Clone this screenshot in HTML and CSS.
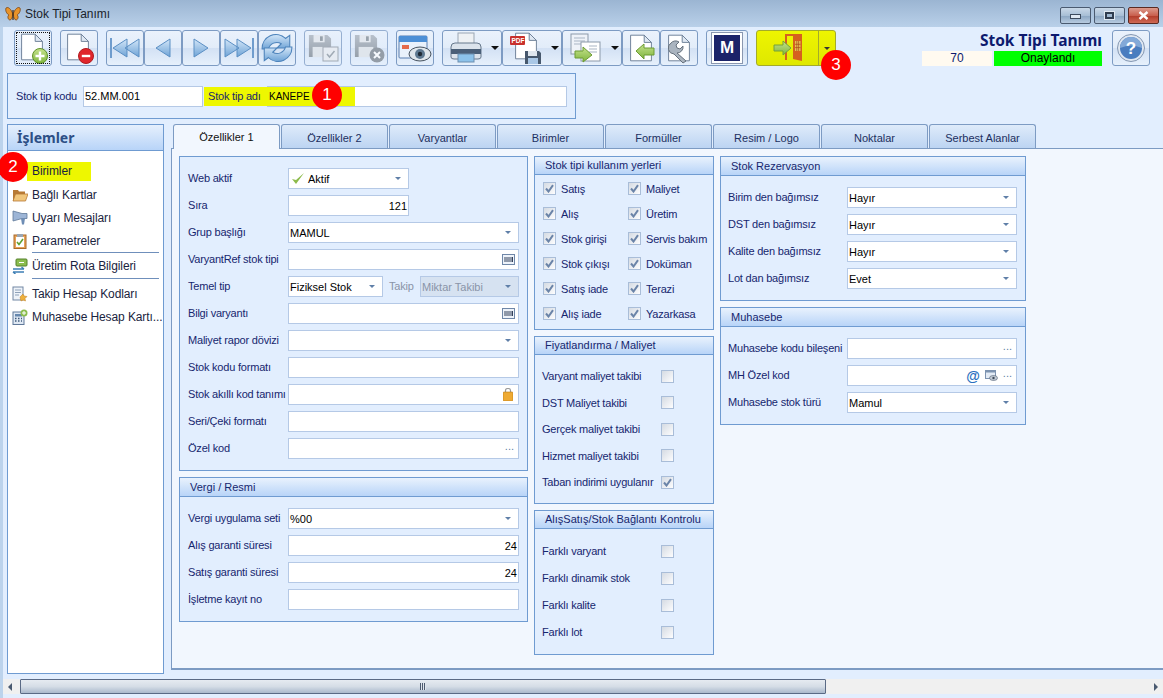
FILE: index.html
```html
<!DOCTYPE html>
<html lang="en">
<head>
    <meta charset="UTF-8">
    <title>Stok Tipi Tanımı</title>
    <link rel="stylesheet" href="styles.css">
</head>
<body>
    <svg class="defs" width="0" height="0">
        <defs>
            <linearGradient id="blueFill" x1="0" y1="0" x2="0" y2="1"><stop offset="0" stop-color="#d3e6f8"/><stop offset="1" stop-color="#6ea3d6"/></linearGradient>
            <linearGradient id="diskFill" x1="0" y1="0" x2="0" y2="1"><stop offset="0" stop-color="#aab2bb"/><stop offset="1" stop-color="#7d868f"/></linearGradient>
            <linearGradient id="greenFill" x1="0" y1="0" x2="0" y2="1"><stop offset="0" stop-color="#c5e28c"/><stop offset="1" stop-color="#7fb53e"/></linearGradient>
            <symbol id="doc" viewBox="0 0 30 34"><path d="M2 1h17l9 9v23H2z" fill="#fff" stroke="#6d7f98" stroke-width="1.2"/><path d="M19 1v9h9z" fill="#dfe8f3" stroke="#6d7f98" stroke-width="1.2"/></symbol>
            <symbol id="disk" viewBox="0 0 26 26"><path d="M1 1h20l4 4v20H1z" fill="url(#diskFill)"/><rect x="6" y="1" width="12" height="8" fill="#e4e7ea"/><rect x="13" y="2.500" width="3" height="5" fill="#808991"/><rect x="5" y="14" width="16" height="11" fill="#dfe3e7"/></symbol>
            <symbol id="check" viewBox="0 0 9 9"><path d="M1 4.500l2.500 3L8 1.200" fill="none" stroke="#6b84a8" stroke-width="2"/></symbol>
            <symbol id="barcode" viewBox="0 0 13 11"><rect x=".5" y=".5" width="12" height="10" fill="#eef3fa" stroke="#6f87a8"/><path d="M3 3v5M5 3v5M7 3v5M9 3v5M10.500 3v5" stroke="#33415a"/></symbol>
        </defs>
    </svg>

    <div class="titlebar">
        <svg class="app-icon" width="16" height="16" viewBox="0 0 16 16"><path d="M7.500 7C5 1 2 1 1 2c-1 3 1 6 3 7-2 1-1 5 1 5 2-.5 2.500-3 2.500-5zM8.500 7c2.500-6 5.500-6 6.500-5 1 3-1 6-3 7 2 1 1 5-1 5-2-.5-2.500-3-2.500-5z" fill="#e8932a" stroke="#7a4413" stroke-width=".8"/><path d="M8 4v10" stroke="#3c2a18" stroke-width="1.200"/></svg>
        <span class="title-text">Stok Tipi Tanımı</span>
        <div class="win-buttons">
            <div class="win-btn"><i class="win-min"></i></div>
            <div class="win-btn"><i class="win-max"></i></div>
            <div class="win-btn close">
                <svg width="11" height="9" viewBox="0 0 11 9"><path d="M1.500 1l8 7M9.500 1l-8 7" stroke="#fff" stroke-width="2.400"/></svg>
            </div>
        </div>
    </div>

    <div class="window">
        <div class="toolbar">
            <div class="tool focus">
                <svg width="30" height="34"><use href="#doc" width="24" height="30" x="2" y="1"/><circle cx="22" cy="25" r="7.500" fill="url(#greenFill)" stroke="#5f9228"/><path d="M22 20.500v9M17.500 25h9" stroke="#fff" stroke-width="2.400"/></svg>
            </div>
            <div class="tool">
                <svg width="30" height="34"><use href="#doc" width="24" height="30" x="2" y="1"/><circle cx="22" cy="25" r="7.500" fill="#e0262c" stroke="#b01a1f"/><path d="M17.800 25h8.400" stroke="#fff" stroke-width="2.400"/></svg>
            </div>
            <div class="tool-group">
                <div class="tool">
                    <svg width="30" height="24" viewBox="0 0 30 24"><path d="M1 2v20" stroke="#6f9ccd" stroke-width="2"/><path d="M17 3v18L3 12zM29 3v18L15 12z" fill="url(#blueFill)" stroke="#5b8fc4"/></svg>
                </div>
                <div class="tool">
                    <svg width="18" height="24" viewBox="0 0 18 24"><path d="M16 3v18L2 12z" fill="url(#blueFill)" stroke="#5b8fc4"/></svg>
                </div>
                <div class="tool">
                    <svg width="18" height="24" viewBox="0 0 18 24"><path d="M2 3v18l14-9z" fill="url(#blueFill)" stroke="#5b8fc4"/></svg>
                </div>
                <div class="tool">
                    <svg width="30" height="24" viewBox="0 0 30 24"><path d="M29 2v20" stroke="#6f9ccd" stroke-width="2"/><path d="M1 3v18l14-9zM13 3v18l14-9z" fill="url(#blueFill)" stroke="#5b8fc4"/></svg>
                </div>
                <div class="tool">
                    <svg width="34" height="30" viewBox="0 0 32 28"><path d="M2 15A13 13 0 0 1 24 5l4-3v12H16l4-4a8 8 0 0 0-12 5z" fill="url(#blueFill)" stroke="#4d83bb"/><path d="M30 13a13 13 0 0 1-22 10l-4 3V14h12l-4 4a8 8 0 0 0 12-5z" fill="url(#blueFill)" stroke="#4d83bb"/></svg>
                </div>
            </div>
            <div class="tool off">
                <svg width="32" height="30"><use href="#disk" width="24" height="24" x="1" y="1"/><rect x="16" y="14" width="15" height="14" fill="#e8ebee" stroke="#8b949d"/><path d="M20 21l2.500 3 5-6" fill="none" stroke="#8b949d" stroke-width="1.500"/></svg>
            </div>
            <div class="tool off">
                <svg width="32" height="30"><use href="#disk" width="24" height="24" x="1" y="1"/><circle cx="24" cy="22" r="7.500" fill="#7b838b"/><path d="M21 19l6 6M27 19l-6 6" stroke="#fff" stroke-width="2"/></svg>
            </div>
            <div class="tool">
                <svg width="34" height="30" viewBox="0 0 34 30"><rect x="1" y="3" width="28" height="22" rx="1" fill="#e9f1fb" stroke="#5a7fb0"/><rect x="1" y="3" width="28" height="6" fill="#4c8fd6"/><rect x="4" y="12" width="7" height="4" fill="#e46a4a"/><ellipse cx="22" cy="21" rx="11" ry="7" fill="#dfe6ec" stroke="#46525f"/><circle cx="22" cy="21" r="5" fill="#5d7890"/><circle cx="22" cy="21" r="2.200" fill="#1f2a36"/></svg>
            </div>
            <div class="tool-group">
                <div class="tool wide">
                    <svg width="32" height="32" viewBox="0 0 32 32"><rect x="8" y="1" width="16" height="12" fill="#eef1f4" stroke="#9aa6b3"/><path d="M1 15q0-4 4-4h22q4 0 4 4v10q0 2-3 2H4q-3 0-3-2z" fill="#dbe3ec" stroke="#66788c"/><rect x="1" y="17" width="30" height="5" fill="#4a5f78"/><rect x="8" y="22" width="16" height="8" fill="#8cc2ea" stroke="#6d8fb0"/></svg>
                    <i class="drop"></i>
                </div>
                <div class="tool wide">
                    <svg width="32" height="34" viewBox="0 0 32 34"><use href="#doc" width="24" height="28" x="4" y="1"/><rect x="0" y="5" width="15" height="9" rx="1" fill="#c8302c"/><text x="1.500" y="12" class="pdf">PDF</text><path d="M15 20h14l2 2v11H15z" fill="#47586d"/><rect x="18" y="20" width="9" height="5" fill="#dfe6ee"/><rect x="18" y="27" width="10" height="6" fill="#a9c7e6"/></svg>
                    <i class="drop"></i>
                </div>
                <div class="tool wide">
                    <svg width="32" height="32" viewBox="0 0 32 32"><rect x="1" y="2" width="17" height="20" fill="#eef2f8" stroke="#8c99aa"/><path d="M4 6h11M4 9h11M4 12h11" stroke="#a9b5c4"/><rect x="11" y="10" width="19" height="19" fill="#fff" stroke="#8c99aa"/><path d="M19 14h8M19 17h8M19 20h8" stroke="#a9b5c4"/><path d="M5 19h8v-4l9 8-9 7v-4H5z" fill="url(#greenFill)" stroke="#6c9c33"/></svg>
                    <i class="drop"></i>
                </div>
                <div class="tool">
                    <svg width="30" height="32"><use href="#doc" width="24" height="30" x="3" y="1"/><path d="M10 19l8-7v4h10v7H18v4z" fill="url(#greenFill)" stroke="#6c9c33"/></svg>
                </div>
                <div class="tool">
                    <svg width="30" height="32"><use href="#doc" width="24" height="30" x="3" y="1"/><path d="M7 11a6 6 0 0 1 8-1l-3 3 1 3 3 1 3-3a6 6 0 0 1-6 7l9 8-3 2-9-9a6 6 0 0 1-3-11z" fill="#aab4bf" stroke="#66717d"/></svg>
                </div>
            </div>
            <div class="tool m-tool"><div class="m-logo">M</div></div>
            <div class="exit-btn">
                <div class="exit-main">
                    <svg width="30" height="32" viewBox="0 0 30 32"><path d="M13 28V3h16" fill="none" stroke="#d5601f" stroke-width="2"/><path d="M20 4l9-2v27l-9-2z" fill="#d5601f"/><rect x="22" y="9" width="5.500" height="10" fill="#e8bf55"/><path d="M23.800 9v10M25.600 9v10M22 12.300h5.500M22 15.600h5.500" stroke="#a84615" stroke-width=".7"/><path d="M1 13h9V9l8 7-8 7v-4H1z" fill="url(#greenFill)" stroke="#75a238"/></svg>
                </div>
                <div class="exit-drop"><i class="arrow dark"></i></div>
            </div>
            <div class="status">
                <div class="status-title">Stok Tipi Tanımı</div>
                <div class="status-cells">
                    <div class="status-code">70</div>
                    <div class="status-state">Onaylandı</div>
                </div>
            </div>
            <div class="tool help">
                <svg width="30" height="30" viewBox="0 0 30 30"><circle cx="15" cy="15" r="13.500" fill="#dfe7f1" stroke="#8497b2"/><circle cx="15" cy="15" r="11" fill="#4a7dbf"/><path d="M4 15a11 11 0 0 1 22 0q-11-5-22 0z" fill="#83a9d8"/><text x="15" y="21" class="help-mark">?</text></svg>
            </div>
        </div>

        <div class="code-panel">
            <span class="label code-label">Stok tip kodu</span>
            <div class="field code-field"><span>52.MM.001</span></div>
            <span class="label marked">Stok tip adı</span>
            <div class="field name-field"><span class="marked-text">KANEPE</span></div>
        </div>

        <div class="content">
            <div class="side-panel">
                <div class="side-head">İşlemler</div>
                <div class="side-list">
                    <div class="side-item"><span class="side-icon"></span><span class="marked birim">Birimler</span></div>
                    <div class="side-item">
                        <svg class="side-icon" width="16" height="14" viewBox="0 0 16 14"><path d="M1 2h5l1 1.500h6V13H1z" fill="#b77a35"/><path d="M3.500 6H16l-2.500 7H1z" fill="#f0c67c" stroke="#b77a35" stroke-width=".8"/></svg>
                        <span>Bağlı Kartlar</span>
                    </div>
                    <div class="side-item">
                        <svg class="side-icon" width="16" height="15" viewBox="0 0 16 15"><path d="M1 1l9 2.500h5v5h-5L1 11z" fill="#9db5d6" stroke="#5f7899" stroke-width=".8"/><path d="M9 8.500h4l-1 6H10z" fill="#6e8db5"/></svg>
                        <span>Uyarı Mesajları</span>
                    </div>
                    <div class="side-item">
                        <svg class="side-icon" width="14" height="16" viewBox="0 0 14 16"><rect x="1" y="2" width="12" height="13.500" fill="#e7a258" stroke="#a96b2a"/><rect x="3" y="4" width="8" height="10" fill="#fff"/><rect x="4" y="1" width="6" height="3" fill="#9aa6b3"/><path d="M4 9l2 2.500L10 6" fill="none" stroke="#5fa030" stroke-width="1.600"/></svg>
                        <span>Parametreler</span>
                    </div>
                    <div class="side-sep"></div>
                    <div class="side-item">
                        <svg class="side-icon" width="16" height="16" viewBox="0 0 16 16"><rect x="4" y="1" width="11" height="7" rx="1" fill="#8bbd4e" stroke="#55802a"/><path d="M7 4.500h5" stroke="#fff"/><path d="M1 11h11M12 11l-2.500-2M1 14h11M1 14l2.500 2" stroke="#3e7fb5" stroke-width="1.400" fill="none"/></svg>
                        <span>Üretim Rota Bilgileri</span>
                    </div>
                    <div class="side-sep low"></div>
                    <div class="side-item">
                        <svg class="side-icon" width="16" height="16" viewBox="0 0 16 16"><rect x="1" y="1" width="10" height="13" fill="#eef3f9" stroke="#7287a3"/><path d="M3 4h6M3 6.500h6M3 9h4" stroke="#8ea1b8"/><path d="M8 11l3-3 1 2 3 .5-2 2 .5 2.500-2.500-1-2 1z" fill="#eeb13e" stroke="#c07d1b" stroke-width=".5"/></svg>
                        <span>Takip Hesap Kodları</span>
                    </div>
                    <div class="side-item">
                        <svg class="side-icon" width="16" height="16" viewBox="0 0 16 16"><rect x="1" y="3" width="11" height="12.500" fill="#dfe8f3" stroke="#5f7899"/><rect x="3" y="5" width="7" height="2.500" fill="#6788ae"/><path d="M3 9.500h1.500M6 9.500h1.500M9 9.500h1M3 12h1.500M6 12h1.500M9 12h1" stroke="#3f5a7c" stroke-width="1.400"/><circle cx="12" cy="4" r="3.500" fill="#8bbd4e"/><path d="M12 2v4M10 4h4" stroke="#fff"/></svg>
                        <span>Muhasebe Hesap Kartı...</span>
                    </div>
                </div>
            </div>

            <div class="tabs-area">
                <div class="tabs">
                    <div class="tab active">Özellikler 1</div>
                    <div class="tab">Özellikler 2</div>
                    <div class="tab">Varyantlar</div>
                    <div class="tab">Birimler</div>
                    <div class="tab">Formüller</div>
                    <div class="tab">Resim / Logo</div>
                    <div class="tab">Noktalar</div>
                    <div class="tab">Serbest Alanlar</div>
                </div>
                <div class="tab-page">
                    <div class="col col-left">
                        <div class="group form-group">
                            <div class="row">
                                <span class="label">Web aktif</span>
                                <div class="field short aktif">
                                    <svg width="14" height="13" viewBox="0 0 14 13"><path d="M1 7l4 5 8-11-8 7z" fill="#8dbb4c"/></svg>
                                    <span>Aktif</span><i class="arrow"></i>
                                </div>
                            </div>
                            <div class="row"><span class="label">Sıra</span><div class="field short num">121</div></div>
                            <div class="row"><span class="label">Grup başlığı</span><div class="field"><span>MAMUL</span><i class="arrow"></i></div></div>
                            <div class="row"><span class="label">VaryantRef stok tipi</span><div class="field"><svg class="end-icon" width="13" height="11"><use href="#barcode"/></svg></div></div>
                            <div class="row">
                                <span class="label">Temel tip</span>
                                <div class="field temel"><span>Fiziksel Stok</span><i class="arrow"></i></div>
                                <span class="label muted">Takip</span>
                                <div class="field disabled"><span>Miktar Takibi</span><i class="arrow"></i></div>
                            </div>
                            <div class="row"><span class="label">Bilgi varyantı</span><div class="field"><svg class="end-icon" width="13" height="11"><use href="#barcode"/></svg></div></div>
                            <div class="row"><span class="label">Maliyet rapor dövizi</span><div class="field"><i class="arrow"></i></div></div>
                            <div class="row"><span class="label">Stok kodu formatı</span><div class="field"></div></div>
                            <div class="row">
                                <span class="label">Stok akıllı kod tanımı</span>
                                <div class="field"><svg class="end-icon lock" width="10" height="13" viewBox="0 0 10 13"><path d="M2.500 5V2.500q0-2 2.500-2t2.500 2V5" fill="none" stroke="#9b9b9b" stroke-width="1.200"/><rect y="4" width="10" height="9" rx="1" fill="#eeaa33" stroke="#b97a14" stroke-width=".6"/></svg></div>
                            </div>
                            <div class="row"><span class="label">Seri/Çeki formatı</span><div class="field"></div></div>
                            <div class="row"><span class="label">Özel kod</span><div class="field"><span class="dots">...</span></div></div>
                        </div>
                        <div class="group">
                            <div class="group-head">Vergi / Resmi</div>
                            <div class="form-group">
                                <div class="row"><span class="label">Vergi uygulama seti</span><div class="field"><span>%00</span><i class="arrow"></i></div></div>
                                <div class="row"><span class="label">Alış garanti süresi</span><div class="field num">24</div></div>
                                <div class="row"><span class="label">Satış garanti süresi</span><div class="field num">24</div></div>
                                <div class="row"><span class="label">İşletme kayıt no</span><div class="field"></div></div>
                            </div>
                        </div>
                    </div>

                    <div class="col col-mid">
                        <div class="group">
                            <div class="group-head">Stok tipi kullanım yerleri</div>
                            <div class="check-grid">
                                <div class="check-item"><div class="box"><svg width="9" height="9"><use href="#check"/></svg></div><span class="label">Satış</span></div>
                                <div class="check-item"><div class="box"><svg width="9" height="9"><use href="#check"/></svg></div><span class="label">Maliyet</span></div>
                                <div class="check-item"><div class="box"><svg width="9" height="9"><use href="#check"/></svg></div><span class="label">Alış</span></div>
                                <div class="check-item"><div class="box"><svg width="9" height="9"><use href="#check"/></svg></div><span class="label">Üretim</span></div>
                                <div class="check-item"><div class="box"><svg width="9" height="9"><use href="#check"/></svg></div><span class="label">Stok girişi</span></div>
                                <div class="check-item"><div class="box"><svg width="9" height="9"><use href="#check"/></svg></div><span class="label">Servis bakım</span></div>
                                <div class="check-item"><div class="box"><svg width="9" height="9"><use href="#check"/></svg></div><span class="label">Stok çıkışı</span></div>
                                <div class="check-item"><div class="box"><svg width="9" height="9"><use href="#check"/></svg></div><span class="label">Doküman</span></div>
                                <div class="check-item"><div class="box"><svg width="9" height="9"><use href="#check"/></svg></div><span class="label">Satış iade</span></div>
                                <div class="check-item"><div class="box"><svg width="9" height="9"><use href="#check"/></svg></div><span class="label">Terazi</span></div>
                                <div class="check-item"><div class="box"><svg width="9" height="9"><use href="#check"/></svg></div><span class="label">Alış iade</span></div>
                                <div class="check-item"><div class="box"><svg width="9" height="9"><use href="#check"/></svg></div><span class="label">Yazarkasa</span></div>
                            </div>
                        </div>
                        <div class="group">
                            <div class="group-head">Fiyatlandırma / Maliyet</div>
                            <div class="check-list">
                                <div class="check-line"><span class="label">Varyant maliyet takibi</span><div class="box"></div></div>
                                <div class="check-line"><span class="label">DST Maliyet takibi</span><div class="box"></div></div>
                                <div class="check-line"><span class="label">Gerçek maliyet takibi</span><div class="box"></div></div>
                                <div class="check-line"><span class="label">Hizmet maliyet takibi</span><div class="box"></div></div>
                                <div class="check-line"><span class="label">Taban indirimi uygulanır</span><div class="box"><svg width="9" height="9"><use href="#check"/></svg></div></div>
                            </div>
                        </div>
                        <div class="group">
                            <div class="group-head">AlışSatış/Stok Bağlantı Kontrolu</div>
                            <div class="check-list wide-lines">
                                <div class="check-line"><span class="label">Farklı varyant</span><div class="box"></div></div>
                                <div class="check-line"><span class="label">Farklı dinamik stok</span><div class="box"></div></div>
                                <div class="check-line"><span class="label">Farklı kalite</span><div class="box"></div></div>
                                <div class="check-line"><span class="label">Farklı lot</span><div class="box"></div></div>
                            </div>
                        </div>
                    </div>

                    <div class="col col-right">
                        <div class="group">
                            <div class="group-head">Stok Rezervasyon</div>
                            <div class="form-group wide-label">
                                <div class="row"><span class="label">Birim den bağımsız</span><div class="field"><span>Hayır</span><i class="arrow"></i></div></div>
                                <div class="row"><span class="label">DST den bağımsız</span><div class="field"><span>Hayır</span><i class="arrow"></i></div></div>
                                <div class="row"><span class="label">Kalite den bağımsız</span><div class="field"><span>Hayır</span><i class="arrow"></i></div></div>
                                <div class="row"><span class="label">Lot dan bağımsız</span><div class="field"><span>Evet</span><i class="arrow"></i></div></div>
                            </div>
                        </div>
                        <div class="group">
                            <div class="group-head">Muhasebe</div>
                            <div class="form-group wide-label">
                                <div class="row"><span class="label">Muhasebe kodu bileşeni</span><div class="field"><span class="dots">...</span></div></div>
                                <div class="row">
                                    <span class="label">MH Özel kod</span>
                                    <div class="field">
                                        <span class="at">@</span>
                                        <svg class="view-icon" width="13" height="11" viewBox="0 0 13 11"><rect x=".5" y=".5" width="10" height="8" fill="#e3ebf5" stroke="#7d93b0"/><rect x=".5" y=".5" width="10" height="2" fill="#7d93b0"/><ellipse cx="8.500" cy="8" rx="4" ry="2.500" fill="#c3ccd6" stroke="#4e5d70" stroke-width=".6"/><circle cx="8.500" cy="8" r="1.200" fill="#3c4a5b"/></svg>
                                        <span class="dots tail">...</span>
                                    </div>
                                </div>
                                <div class="row"><span class="label">Muhasebe stok türü</span><div class="field"><span>Mamul</span><i class="arrow"></i></div></div>
                            </div>
                        </div>
                    </div>
                </div>
            </div>
        </div>

        <div class="scrollbar">
            <i class="scroll-left"></i>
            <div class="thumb"><span class="grip"></span></div>
            <i class="scroll-right"></i>
        </div>
    </div>

    <div class="badge badge-one">1</div>
    <div class="badge badge-two">2</div>
    <div class="badge badge-three">3</div>
</body>
</html>
```

FILE: styles.css
```css
html, body {
    height: 100%;
}
body {
    font-family: "Liberation Sans", Arial, sans-serif;
    font-size: 11px;
    margin: 0;
    height: 698px;
    overflow: hidden;
    position: relative;
    background-color: #bcd3ec;
    color: #000;
    display: flex;
    flex-direction: column;
}
.defs {
    position: absolute;
}
.titlebar {
    height: 27px;
    flex: none;
    display: flex;
    align-items: center;
    padding: 0 4px 0 5px;
    background: linear-gradient(to bottom, #9bb5d2, #b9d0e9);
}
.app-icon {
    margin-right: 4px;
}
.title-text {
    font-size: 12px;
    color: #1a1f2b;
}
.win-buttons {
    margin-left: auto;
    margin-top: 3px;
    display: flex;
    gap: 3px;
}
.win-btn {
    width: 29px;
    height: 15px;
    border: 1px solid #4a5a70;
    border-radius: 2px;
    background: linear-gradient(to bottom, #c9d8e8 0, #a8bfd6 50%, #8aa5c2 51%, #b7cbe0 100%);
    display: flex;
    align-items: center;
    justify-content: center;
}
.win-btn.close {
    border-color: #5a2a22;
    background: linear-gradient(to bottom, #dc9a8c 0, #c9604e 50%, #b13a28 51%, #cf6a55 100%);
}
.win-min {
    width: 9px;
    height: 3px;
    margin-top: 3px;
    background-color: #dfe8f2;
    border: 1px solid #3c4a5d;
}
.win-max {
    width: 5px;
    height: 3px;
    background-color: #9fb7d0;
    border: 2px solid #2f3d50;
    outline: 1px solid #dfe8f2;
}
.window {
    flex: 1 1 auto;
    margin-left: 3px;
    background-color: #e2eefe;
    display: flex;
    flex-direction: column;
    min-height: 0;
}

/* toolbar */
.toolbar {
    display: flex;
    gap: 8px;
    padding: 3px 13px 0 11px;
    height: 36px;
    flex: none;
}
.tool-group {
    display: flex;
}
.tool {
    width: 38px;
    height: 36px;
    box-sizing: border-box;
    border: 1px solid #7d9bc3;
    border-radius: 3px;
    background: linear-gradient(to bottom, #eaf2fc 0, #e2ecf9 50%, #d3e1f4 51%, #e6f0fc 100%);
    display: flex;
    align-items: center;
    justify-content: center;
}
.tool.focus {
    outline: 1px dotted #111;
    outline-offset: -3px;
}
.tool.off {
    opacity: .75;
}
.tool.wide {
    width: 60px;
    justify-content: flex-start;
    padding-left: 7px;
}
.drop {
    margin-left: 9px;
    border-left: 4px solid transparent;
    border-right: 4px solid transparent;
    border-top: 4px solid #111;
}
.pdf {
    font-size: 6.500px;
    font-weight: bold;
    fill: #fff;
}
.m-tool {
    width: 42px;
}
.m-logo {
    width: 26px;
    height: 26px;
    background-color: #1b2369;
    border: 2px solid #fff;
    outline: 1px solid #8a97b0;
    color: #fff;
    font-size: 17px;
    font-weight: bold;
    line-height: 26px;
    text-align: center;
}
.exit-btn {
    width: 80px;
    height: 36px;
    box-sizing: border-box;
    border: 1px solid #a3ab2a;
    border-radius: 3px;
    background: linear-gradient(to bottom, #eef500, #dfe800);
    display: flex;
}
.exit-main {
    flex: 1 1 auto;
    display: flex;
    align-items: center;
    justify-content: center;
    border-right: 1px solid #a3ab2a;
}
.exit-drop {
    width: 16px;
    display: flex;
    align-items: center;
    justify-content: center;
}
.status {
    margin-left: auto;
    width: 180px;
    display: flex;
    flex-direction: column;
    align-items: flex-end;
}
.status-title {
    font-family: "Noto Sans", sans-serif;
    font-size: 15.500px;
    font-weight: bold;
    color: #0d1a6e;
    line-height: 21px;
}
.status-cells {
    display: flex;
    gap: 2px;
    width: 180px;
    text-align: center;
    font-size: 12px;
    line-height: 15px;
}
.status-code {
    width: 70px;
    background-color: #fffaf0;
    color: #0d1a6e;
}
.status-state {
    flex: 1 1 auto;
    background-color: #00ff00;
}
.help {
    margin-left: 2px;
}
.help-mark {
    font-size: 17px;
    font-weight: bold;
    fill: #fff;
    text-anchor: middle;
}

/* code panel */
.code-panel {
    margin: 7px 0 0 4px;
    width: 569px;
    height: 46px;
    box-sizing: border-box;
    border: 1px solid #6f9bd1;
    display: flex;
    align-items: center;
    padding: 0 8px;
    flex: none;
}
.label {
    color: #16266e;
    white-space: nowrap;
    letter-spacing: -.2px;
}
.code-label {
    width: 67px;
    flex: none;
}
.code-field {
    flex: none;
    width: 120px;
}
.code-panel .marked {
    margin-left: 1px;
    width: 63px;
    flex: none;
    box-sizing: border-box;
    padding-left: 4px;
    line-height: 19px;
}
.marked {
    background-color: #eef700;
}
.name-field {
    flex: none;
    width: 300px;
}
.marked-text {
    background-color: #eef700;
    width: 88px;
    font-size: 10px;
    line-height: 19px;
    margin-left: -2px;
    padding-left: 2px;
    display: block;
    box-sizing: border-box;
}

/* left panel and tabs */
.content {
    flex: 1 1 auto;
    display: flex;
    gap: 7px;
    margin: 5px 0 0 4px;
    min-height: 0;
}
.side-panel {
    width: 157px;
    height: 550px;
    flex: none;
    box-sizing: border-box;
    border: 1px solid #6f9bd1;
    background-color: #fff;
}
.side-head {
    height: 26px;
    line-height: 26px;
    box-sizing: border-box;
    padding-left: 9px;
    font-family: "Noto Sans", sans-serif;
    font-size: 14px;
    font-weight: bold;
    color: #2d4f86;
    background: linear-gradient(to bottom, #e6f0fd, #b8d4f8);
    border-bottom: 1px solid #6f9bd1;
}
.side-list {
    padding: 9px 0 0 4px;
}
.side-item {
    height: 23px;
    display: flex;
    align-items: center;
    font-size: 12px;
    letter-spacing: -.1px;
    color: #1a2440;
    white-space: nowrap;
}
.side-icon {
    width: 16px;
    flex: none;
    margin-right: 4px;
}
.birim {
    width: 64px;
    margin-left: -5px;
    padding-left: 5px;
    line-height: 19px;
    box-sizing: border-box;
}
.side-sep {
    height: 1px;
    margin: 0 4px 1px 20px;
    background-color: #6f8fbb;
}
.side-sep.low {
    margin-top: 1px;
    margin-bottom: 3px;
}
.tabs-area {
    flex: 1 1 auto;
    min-width: 0;
    display: flex;
    flex-direction: column;
    height: 546px;
}
.tabs {
    display: flex;
    gap: 1px;
    padding-left: 2px;
    height: 24px;
    flex: none;
}
.tab {
    width: 107px;
    box-sizing: border-box;
    border: 1px solid #7d9bc3;
    border-bottom: none;
    border-radius: 3px 3px 0 0;
    background: linear-gradient(to bottom, #dfebfa, #bcd4f2);
    color: #1c2f60;
    text-align: center;
    line-height: 27px;
}
.tab.active {
    height: 25px;
    background: #f2f7fe;
    color: #111;
    z-index: 1;
    line-height: 24px;
}
.tab-page {
    flex: 1 1 auto;
    box-sizing: border-box;
    border-top: 1px solid #7d9bc3;
    border-left: 1px solid #7d9bc3;
    border-bottom: 2px solid #7d9bc3;
    background-color: #f2f7fe;
    padding: 7px 0 0 7px;
    display: flex;
    gap: 6px;
    align-items: flex-start;
}
.col {
    display: flex;
    flex-direction: column;
    gap: 6px;
    flex: none;
}
.col-left {
    width: 349px;
}
.col-mid {
    width: 180px;
}
.col-right {
    width: 306px;
}
.group {
    border: 1px solid #6f9bd1;
    background-color: #e2eefe;
}
.group-head {
    height: 18px;
    line-height: 18px;
    padding-left: 10px;
    color: #16266e;
    background: linear-gradient(to bottom, #e9f2fd, #b8d4f8);
    border-bottom: 1px solid #6f9bd1;
}
.col-mid .group-head {
    height: 17px;
    line-height: 17px;
}

/* forms */
.form-group {
    display: flex;
    flex-direction: column;
    gap: 6px;
    padding: 11px 8px 11px 8px;
}
.row {
    display: flex;
    align-items: center;
    height: 21px;
}
.row > .label {
    width: 100px;
    flex: none;
    margin-bottom: 2px;
}
.wide-label {
    padding-left: 7px;
}
.wide-label .row > .label {
    width: 119px;
}
.row > .label.muted {
    width: 31px;
    margin-left: 6px;
    color: #8a94a8;
}
.field {
    flex: 1 1 auto;
    min-width: 0;
    height: 21px;
    box-sizing: border-box;
    border: 1px solid #b5c9e6;
    background-color: #fff;
    display: flex;
    align-items: center;
    padding: 0 1px;
    color: #000;
    white-space: nowrap;
}
.field.short {
    flex: none;
    width: 121px;
}
.field.temel {
    flex: none;
    width: 95px;
}
.field.disabled {
    background-color: #d6e2f1;
    color: #8a94a8;
}
.num {
    justify-content: flex-end;
    padding-right: 1px;
}
.aktif svg {
    margin-right: 3px;
    margin-left: 1px;
}
.arrow {
    margin-left: auto;
    margin-right: 6px;
    border-left: 3px solid transparent;
    border-right: 3px solid transparent;
    border-top: 3px solid #5f7fa8;
}
.arrow.dark {
    margin: 0;
    border-top-color: #333;
}
.end-icon {
    margin-left: auto;
    margin-right: 2px;
}
.lock {
    margin-right: 4px;
}
.dots {
    margin-left: auto;
    margin-right: 3px;
    margin-bottom: 5px;
    color: #5f7fa8;
}
.dots.tail {
    margin-left: 5px;
}
.at {
    margin-left: auto;
    font-size: 14px;
    font-weight: bold;
    color: #2a6fc0;
}
.view-icon {
    margin-left: 5px;
}

/* checkboxes */
.box {
    width: 11px;
    height: 11px;
    flex: none;
    border: 1px solid #a9bdd8;
    background: linear-gradient(to bottom right, #d5dbe3, #fdfdfe);
    display: flex;
    align-items: center;
    justify-content: center;
}
.check-grid {
    display: grid;
    grid-template-columns: 85px 85px;
    grid-auto-rows: 25px;
    padding: 1px 0 3px 8px;
}
.check-item {
    display: flex;
    align-items: center;
    gap: 5px;
}
.check-list {
    display: flex;
    flex-direction: column;
    padding: 8px 0 7px 7px;
}
.check-line {
    height: 26.500px;
    display: flex;
    align-items: center;
}
.check-line .label {
    width: 119px;
    flex: none;
}
.wide-lines {
    padding-top: 9px;
    padding-bottom: 8px;
}
.wide-lines .check-line {
    height: 27px;
}

/* bottom scrollbar */
.scrollbar {
    margin-top: auto;
    margin-bottom: 4px;
    height: 15px;
    flex: none;
    background-color: #f0f0f0;
    display: flex;
    align-items: center;
}
.scroll-left {
    margin-left: 5px;
    border-top: 4px solid transparent;
    border-bottom: 4px solid transparent;
    border-right: 4px solid #4a5a70;
}
.thumb {
    width: 806px;
    height: 15px;
    margin-left: 8px;
    box-sizing: border-box;
    border: 1px solid #5a6a85;
    border-radius: 1px;
    background: linear-gradient(to bottom, #e6ebf1, #d5dde6 50%, #aab9cc);
    display: flex;
    align-items: center;
    justify-content: center;
}
.grip {
    width: 6px;
    height: 7px;
    background: repeating-linear-gradient(to right, #4d5b70 0, #4d5b70 1px, #dfe5ec 1px, #dfe5ec 2px);
}
.scroll-right {
    margin-left: auto;
    margin-right: 5px;
    border-top: 4px solid transparent;
    border-bottom: 4px solid transparent;
    border-left: 4px solid #4a5a70;
}

/* numbered callouts */
.badge {
    position: absolute;
    width: 30px;
    height: 30px;
    border-radius: 50%;
    background-color: #ff0000;
    color: #fff;
    font-size: 17px;
    line-height: 29px;
    text-align: center;
    z-index: 5;
}
.badge-one {
    left: 312px;
    top: 80px;
}
.badge-two {
    left: -2px;
    top: 152px;
}
.badge-three {
    left: 821px;
    top: 50px;
}
```
